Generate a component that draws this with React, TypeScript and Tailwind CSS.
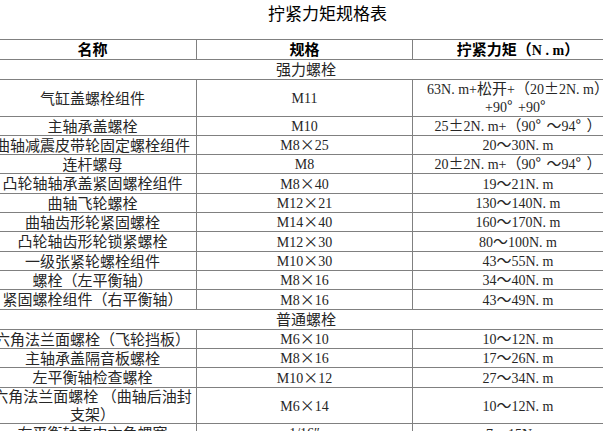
import React from "react";

type Row =
  | { kind: "section"; label: string; h: string }
  | { kind: "item"; name: string[]; spec: string; torque: string[]; h: string };

// full-width glyphs render in the CJK face, latin runs a touch smaller
const WIDE = /([\u00b0\u00b1\u00d7\u3000-\u9fff\uff00-\uffef]+)/;

function Wide({ text }: { text: string }) {
  const bits = text.split(/(°)/);
  return (
    <span className="font-['Noto_Sans_CJK_SC',sans-serif]">
      {bits.map((b, j) =>
        b === "°" ? (
          <span key={j} className="inline-block w-[11px] text-left">
            °
          </span>
        ) : (
          b
        )
      )}
    </span>
  );
}

function Mixed({ text }: { text: string }) {
  return (
    <>
      {text.split(WIDE).map((part, i) =>
        part === "" ? null : i % 2 === 1 ? (
          <Wide key={i} text={part} />
        ) : (
          <span key={i} className="text-[14px]">
            {part}
          </span>
        )
      )}
    </>
  );
}

const rows: Row[] = [
  { kind: "section", label: "强力螺栓", h: "h-[20px]" },
  {
    kind: "item",
    name: ["气缸盖螺栓组件"],
    spec: "M11",
    torque: ["63N. m+松开+（20±2N. m）", "+90°+90°"],
    h: "h-[37px]"
  },
  { kind: "item", name: ["主轴承盖螺栓"], spec: "M10", torque: ["25±2N. m+（90°～94°）"], h: "h-[19px]" },
  { kind: "item", name: ["曲轴减震皮带轮固定螺栓组件"], spec: "M8×25", torque: ["20～30N. m"], h: "h-[19px]" },
  { kind: "item", name: ["连杆螺母"], spec: "M8", torque: ["20±2N. m+（90°～94°）"], h: "h-[19px]" },
  { kind: "item", name: ["凸轮轴轴承盖紧固螺栓组件"], spec: "M8×40", torque: ["19～21N. m"], h: "h-[20px]" },
  { kind: "item", name: ["曲轴飞轮螺栓"], spec: "M12×21", torque: ["130～140N. m"], h: "h-[19px]" },
  { kind: "item", name: ["曲轴齿形轮紧固螺栓"], spec: "M14×40", torque: ["160～170N. m"], h: "h-[19px]" },
  { kind: "item", name: ["凸轮轴齿形轮锁紧螺栓"], spec: "M12×30", torque: ["80～100N. m"], h: "h-[20px]" },
  { kind: "item", name: ["一级张紧轮螺栓组件"], spec: "M10×30", torque: ["43～55N. m"], h: "h-[19px]" },
  { kind: "item", name: ["螺栓（左平衡轴）"], spec: "M8×16", torque: ["34～40N. m"], h: "h-[19px]" },
  { kind: "item", name: ["紧固螺栓组件（右平衡轴）"], spec: "M8×16", torque: ["43～49N. m"], h: "h-[20px]" },
  { kind: "section", label: "普通螺栓", h: "h-[20px]" },
  { kind: "item", name: ["六角法兰面螺栓（飞轮挡板）"], spec: "M6×10", torque: ["10～12N. m"], h: "h-[19px]" },
  { kind: "item", name: ["主轴承盖隔音板螺栓"], spec: "M8×16", torque: ["17～26N. m"], h: "h-[19px]" },
  { kind: "item", name: ["左平衡轴检查螺栓"], spec: "M10×12", torque: ["27～34N. m"], h: "h-[20px]" },
  {
    kind: "item",
    name: ["六角法兰面螺栓 （曲轴后油封", "支架）"],
    spec: "M6×14",
    torque: ["10～12N. m"],
    h: "h-[36px]"
  },
  { kind: "item", name: ["右平衡轴壳内六角螺塞"], spec: "1/16″", torque: ["7～15N. m"], h: "h-[20px]" }
];

function Cell({ lines, className }: { lines: string[]; className: string }) {
  return (
    <div className={`flex items-center justify-center ${className}`}>
      <div className="whitespace-nowrap text-center">
        {lines.map((line) => (
          <div key={line}>
            <Mixed text={line} />
          </div>
        ))}
      </div>
    </div>
  );
}

export default function App() {
  return (
    <div className="h-[431px] w-[603px] overflow-hidden bg-white font-['Liberation_Serif','Noto_Sans_CJK_SC',serif] text-[15px] leading-[16px] text-[#262626]">
      <div className="flex h-[30px] items-center pl-[268px] text-[17px] text-black">拧紧力矩规格表</div>

      <div className="ml-[-11px] mt-[9px] w-[634px] border-t border-[#808080]">
        <div className="flex h-[20px] border-b border-[#808080] font-bold text-black">
          <Cell lines={["名称"]} className="w-[208px] border-r border-[#808080]" />
          <Cell lines={["规格"]} className="w-[216px] border-r border-[#808080]" />
          <Cell lines={["拧紧力矩（N . m）"]} className="flex-1" />
        </div>

        {rows.map((row, i) =>
          row.kind === "section" ? (
            <div key={i} className={`flex items-center justify-center border-b border-[#808080] ${row.h}`}>
              {row.label}
            </div>
          ) : (
            <div key={i} className={`flex border-b border-[#808080] ${row.h}`}>
              <Cell lines={row.name} className="w-[208px] border-r border-[#808080]" />
              <Cell lines={[row.spec]} className="w-[216px] border-r border-[#808080]" />
              <Cell lines={row.torque} className="flex-1" />
            </div>
          )
        )}
      </div>
    </div>
  );
}
